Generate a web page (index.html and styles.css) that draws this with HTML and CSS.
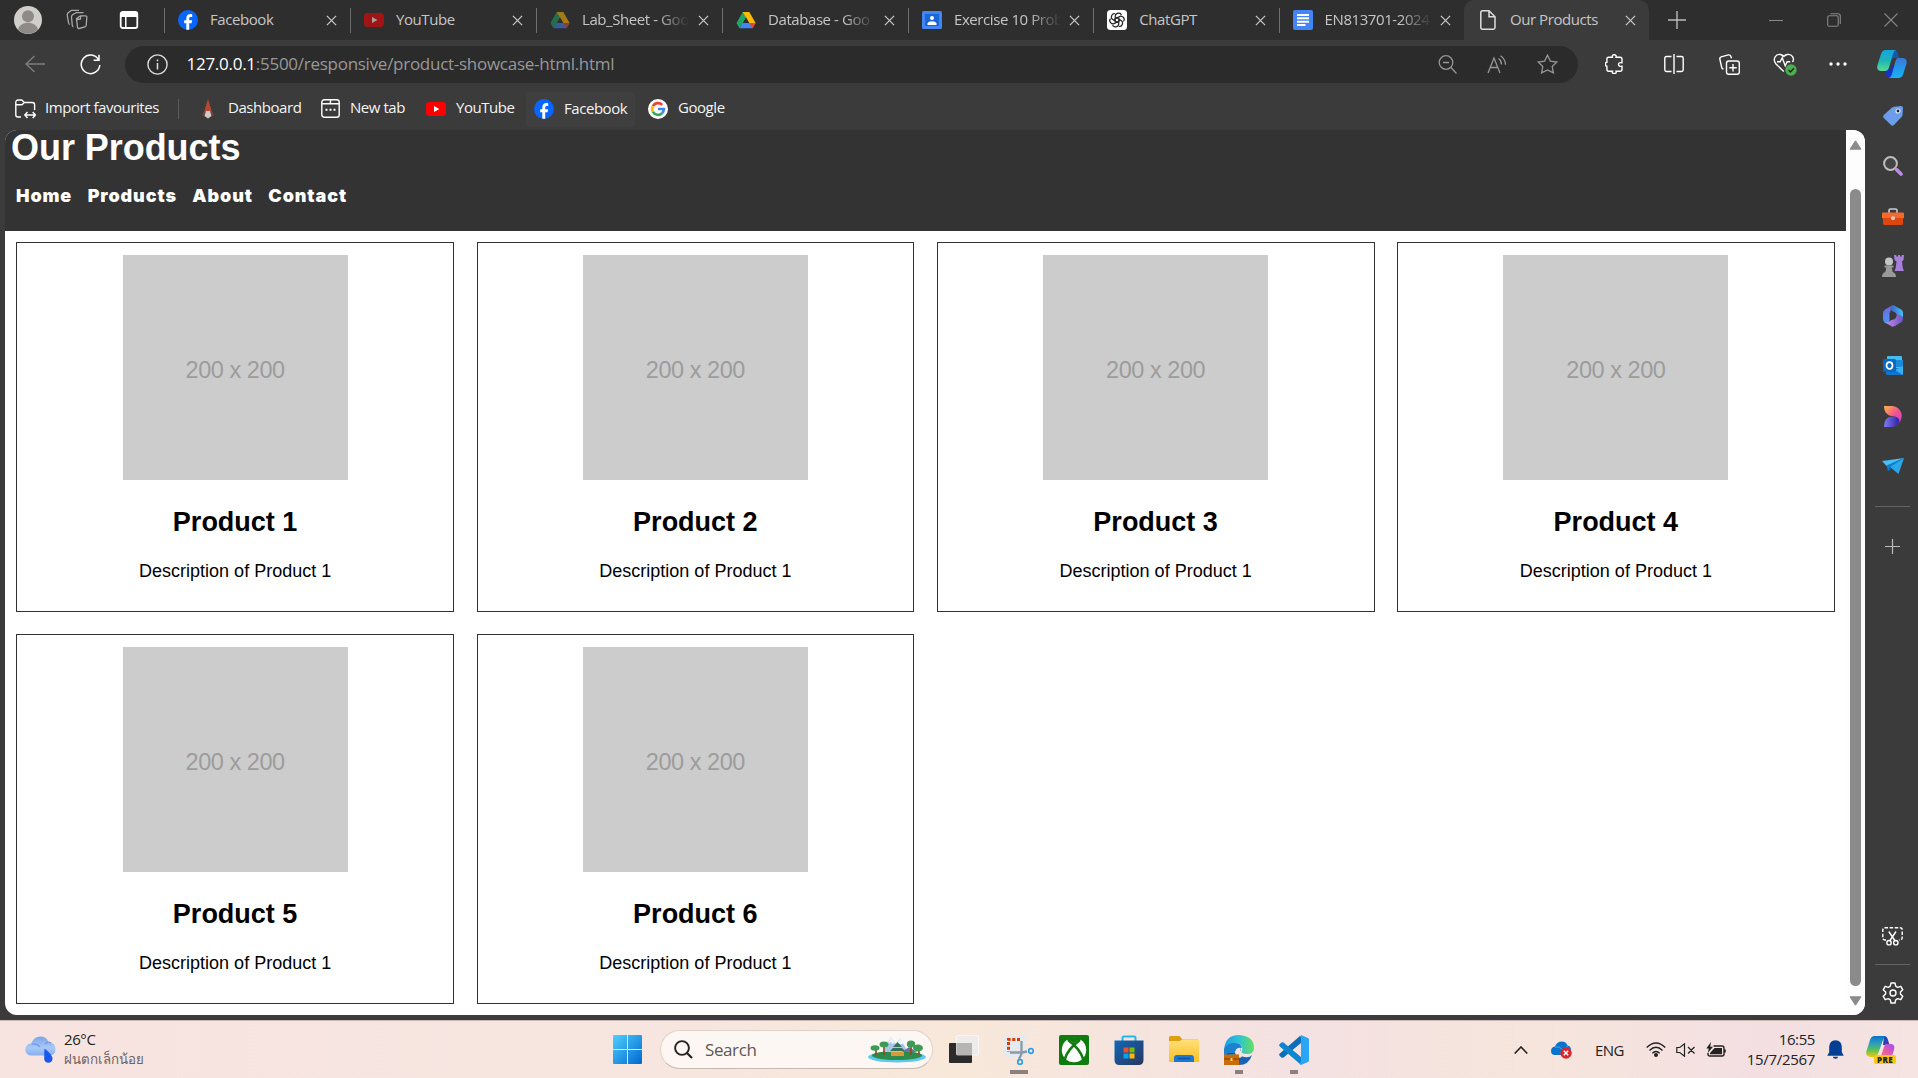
FILE: index.html
```html
<!DOCTYPE html>
<html lang="en">
<head>
<meta charset="utf-8">
<title>Our Products</title>
<link rel="stylesheet" href="styles.css">
</head>
<body>
<svg class="defs" width="0" height="0" aria-hidden="true">
  <defs>
    <linearGradient id="gCop1" x1="0" y1="0" x2="0" y2="1"><stop offset="0" stop-color="#16a3df"/><stop offset=".5" stop-color="#1cb4b8"/><stop offset="1" stop-color="#5bdc8f"/></linearGradient>
    <linearGradient id="gCop2" x1="0" y1="0" x2="0" y2="1"><stop offset="0" stop-color="#3a78dc"/><stop offset="1" stop-color="#13b5f5"/></linearGradient>
    <linearGradient id="gM1" x1="0" y1="0" x2="0" y2="1"><stop offset="0" stop-color="#7a5fe0"/><stop offset="1" stop-color="#3f9cf0"/></linearGradient>
    <linearGradient id="gM2" x1="0" y1="0" x2="1" y2="0"><stop offset="0" stop-color="#3a60c8"/><stop offset="1" stop-color="#41c5f2"/></linearGradient>
    <linearGradient id="gM3" x1="0" y1="0" x2="1" y2="0"><stop offset="0" stop-color="#c58cf0"/><stop offset="1" stop-color="#6d55c4"/></linearGradient>
    <linearGradient id="gDes1" x1="0" y1="0" x2="1" y2="1"><stop offset="0" stop-color="#ffb648"/><stop offset=".5" stop-color="#f2558a"/><stop offset="1" stop-color="#c03be8"/></linearGradient>
    <linearGradient id="gDes2" x1="0" y1="0" x2="1" y2="0"><stop offset="0" stop-color="#7d7cf8"/><stop offset="1" stop-color="#2d1f9c"/></linearGradient>
    <linearGradient id="gWin" x1="0" y1="0" x2="1" y2="1"><stop offset="0" stop-color="#4fd0ff"/><stop offset="1" stop-color="#0067cf"/></linearGradient>
    <linearGradient id="gCloud" x1="0" y1="0" x2="0" y2="1"><stop offset="0" stop-color="#7ba4e8"/><stop offset=".6" stop-color="#a9c9f7"/><stop offset="1" stop-color="#86aeec"/></linearGradient>
    <linearGradient id="gFold" x1="0" y1="0" x2="0" y2="1"><stop offset="0" stop-color="#ffe07a"/><stop offset="1" stop-color="#fbbf24"/></linearGradient>
    <linearGradient id="gStore" x1="0" y1="0" x2="1" y2="1"><stop offset="0" stop-color="#1069b8"/><stop offset="1" stop-color="#2b3560"/></linearGradient>
    <linearGradient id="gEdge" x1="0" y1="0" x2="1" y2="0"><stop offset="0" stop-color="#1c9fe0"/><stop offset=".5" stop-color="#2cc3d5"/><stop offset="1" stop-color="#66e05c"/></linearGradient>
    <linearGradient id="gRain" x1="0" y1="0" x2="0" y2="1"><stop offset="0" stop-color="#0a72c8"/><stop offset=".35" stop-color="#2c9cc0"/><stop offset=".65" stop-color="#57bf5c"/><stop offset="1" stop-color="#f3c80f"/></linearGradient>
    <linearGradient id="gPink" x1="1" y1="0" x2="0" y2="1"><stop offset="0" stop-color="#a04df5"/><stop offset=".55" stop-color="#f0609a"/><stop offset="1" stop-color="#ff8a4c"/></linearGradient>
    <symbol id="x" viewBox="0 0 12 12"><path d="M1 1l10 10M11 1L1 11" fill="none" stroke="currentColor" stroke-width="1.4"/></symbol>
    <symbol id="fb" viewBox="0 0 20 20"><circle cx="10" cy="10" r="10" fill="#0866ff"/><path d="M8.3 19.8v-6.6H6.2v-3h2.1V8.7c0-3.200 1.500-4.700 4.700-4.600l1.200.15v2.700h-1.300c-1.300 0-1.700.5-1.700 1.700v1.500h2.900l-.5 3h-2.400v6.650z" fill="#fff"/></symbol>
    <symbol id="yt" viewBox="0 0 20 20"><rect y="3" width="20" height="14" rx="3.400" fill="#f00"/><path d="M8 7l5.400 3L8 13z" fill="#fff"/></symbol>
    <symbol id="drive" viewBox="0 0 20 20"><path d="M6.700 2h6.600L7 13 3.500 18.300 0.500 13z" fill="#1fa463"/><path d="M6.700 2h6.600l6.300 11h-6.300z" fill="#ffba00"/><path d="M6.700 13h12.900l-3.100 5.300H3.500z" fill="#4285f4"/><path d="M13.300 13h6.300l-3.100 5.300z" fill="#ea4335"/><path d="M10 7.700L7 13h6z" fill="#2e2e2e"/></symbol>
  </defs>
</svg>

<div class="browser">
  <header class="tabs">
    <div class="window-tools">
      <svg width="28" height="28" viewBox="0 0 28 28"><circle cx="14" cy="14" r="14" fill="#d0cecb"/><circle cx="14" cy="10.300" r="6" fill="#8d8a87"/><path d="M4 23.500c2-9 18-9 20 0A14 14 0 0 1 4 23.500z" fill="#8d8a87"/></svg>
      <svg width="22" height="22" viewBox="0 0 22 22" fill="none" stroke="#a9a9a9" stroke-width="1.300" stroke-linejoin="round"><path d="M10.500 9.500l4-2.700h5q1.500 0 1.300 1.500l-.6 8.200q-.2 1.200-1.300 1.400l-5.700 1.600q-1.500.2-1.700-1.200zM14.500 7v3l-4 .5"/><path d="M7.500 18q-1-.3-1.200-1.500L5.500 8q0-1.500 1-2.200L10 3.700h7.500M3.800 15.500q-1-.3-1.200-1.500L1.200 6q0-1.500 1-2.300L5.500 1.300h7.500"/></svg>
      <svg width="20" height="20" viewBox="0 0 20 20"><rect x="1.700" y="2" width="16.600" height="16" rx="2" fill="none" stroke="#fff" stroke-width="1.800"/><path d="M1.500 2.500h17V7h-17zM6 6h1.500v12H6z" fill="#fff"/></svg>
    </div>
    <div class="tab"><svg class="fav"><use href="#fb"/></svg><span class="name">Facebook</span><svg class="close"><use href="#x"/></svg></div>
    <div class="tab dim"><svg class="fav"><use href="#yt"/></svg><span class="name">YouTube</span><svg class="close"><use href="#x"/></svg></div>
    <div class="tab dim"><svg class="fav"><use href="#drive"/></svg><span class="name fade">Lab_Sheet - Goo</span><svg class="close"><use href="#x"/></svg></div>
    <div class="tab"><svg class="fav"><use href="#drive"/></svg><span class="name fade">Database - Goo</span><svg class="close"><use href="#x"/></svg></div>
    <div class="tab"><svg class="fav" viewBox="0 0 20 20"><rect y="1" width="20" height="18" rx="1.500" fill="#4285f4"/><rect x="3" y="4" width="14" height="12" fill="#1967d2"/><circle cx="10" cy="8" r="2" fill="#fff"/><path d="M5.500 15v-1.500c1-3 8-3 9 0V15z" fill="#fff"/></svg><span class="name fade">Exercise 10 Prob</span><svg class="close"><use href="#x"/></svg></div>
    <div class="tab"><svg class="fav" viewBox="0 0 20 20"><rect width="20" height="20" rx="3.500" fill="#fff"/><g fill="none" stroke="#222" stroke-width="1.150"><path d="M8.200 12.800V6.600c0-4 5.500-4.600 6.200-1.500"/><path d="M8.200 12.800V6.600c0-4 5.500-4.600 6.200-1.500" transform="rotate(60 10 10)"/><path d="M8.200 12.800V6.600c0-4 5.500-4.600 6.200-1.500" transform="rotate(120 10 10)"/><path d="M8.200 12.800V6.600c0-4 5.500-4.600 6.200-1.500" transform="rotate(180 10 10)"/><path d="M8.200 12.800V6.600c0-4 5.500-4.600 6.200-1.500" transform="rotate(240 10 10)"/><path d="M8.200 12.800V6.600c0-4 5.500-4.600 6.200-1.500" transform="rotate(300 10 10)"/></g></svg><span class="name">ChatGPT</span><svg class="close"><use href="#x"/></svg></div>
    <div class="tab"><svg class="fav" viewBox="0 0 20 20"><rect width="20" height="20" rx="2" fill="#4285f4"/><path d="M4 5h12M4 8.300h12M4 11.700h12M4 15h8.500" stroke="#fff" stroke-width="1.900"/></svg><span class="name fade">EN813701-2024</span><svg class="close"><use href="#x"/></svg></div>
    <div class="tab active"><svg class="fav" viewBox="0 0 20 20" fill="none" stroke="#ddd" stroke-width="1.500"><path d="M4.500.8h6.500l6 6v10.700q0 1.700-1.700 1.700H4.500q-1.700 0-1.700-1.700V2.500Q2.800.8 4.500.8zM11 .8v6h6"/></svg><span class="name">Our Products</span><svg class="close"><use href="#x"/></svg></div>
    <svg class="new-tab" viewBox="0 0 18 18"><path d="M9 0v18M0 9h18" stroke="#bbb" stroke-width="1.400"/></svg>
    <div class="window-buttons">
      <svg viewBox="0 0 14 14"><path d="M0 7.500h14"/></svg>
      <svg viewBox="0 0 14 14"><rect x=".7" y="2.700" width="10.500" height="10.500" rx="1.500"/><path d="M3.500.7H11q2.300 0 2.300 2.300v8"/></svg>
      <svg viewBox="0 0 14 14"><path d="M.5.5l13 13M13.500.5l-13 13"/></svg>
    </div>
  </header>

  <div class="toolbar">
    <div class="slot back"><svg width="20" height="18" viewBox="0 0 20 18"><path d="M20 9H1M9.500 1L1 9l8.500 8" fill="none" stroke="#7c7c7c" stroke-width="1.400"/></svg></div>
    <div class="slot reload"><svg width="21" height="21" viewBox="0 0 21 21"><path d="M18.500 5.500A9.300 9.300 0 1 0 19.800 11M19 .8v5.400h-5.400" fill="none" stroke="#fff" stroke-width="1.500"/></svg></div>
    <div class="address">
      <svg width="21" height="21" viewBox="0 0 21 21"><circle cx="10.500" cy="10.500" r="9.600" fill="none" stroke="#ddd" stroke-width="1.400"/><path d="M10.500 9v6.500M10.500 5.500v1.700" stroke="#ddd" stroke-width="1.500"/></svg>
      <span class="url"><b>127.0.0.1</b>:5500/responsive/product-showcase-html.html</span>
      <svg width="19" height="19" viewBox="0 0 19 19" class="ln"><circle cx="8" cy="7.500" r="6.800"/><path d="M13 12.500l5.500 6M5 7.500h6"/></svg>
      <svg width="20" height="19" viewBox="0 0 20 19" class="ln"><path d="M1 18L7 3l6 15M3.300 12.500h7.500M11.500 3.500q3 2 3 6M13.500.8q5 3.500 5 9"/></svg>
      <svg width="21" height="20" viewBox="0 0 21 20" class="ln"><path d="M10.500 1.200l2.900 5.900 6.500.9-4.700 4.500 1.200 6.400-5.900-3-5.900 3 1.200-6.400L1.100 8l6.500-.9z"/></svg>
    </div>
    <div class="slot puzzle"><svg width="19" height="20" viewBox="0 0 19 20" class="wh"><path d="M3.500 3.200h4q-.8-2.500 1.700-2.500t1.800 2.500h4q2 0 2 2v3.500q-3.500-.5-3.500 1.800t3.500 1.800v3q0 2-2 2h-4q.8 2.200-1.800 2.200t-1.700-2.200h-4q-1.600 0-1.600-2v-3Q.5 12.500.5 10.200t1.400-2V5.200q0-2 1.600-2z"/></svg></div>
    <i class="rule"></i>
    <div class="slot split"><svg width="20" height="20" viewBox="0 0 20 20" class="wh"><path d="M10 0v20M7.500 2.500h-5Q.8 2.500.8 4.200v11.600q0 1.700 1.700 1.700h5M12.500 2.500h5q1.700 0 1.700 1.700v11.600q0 1.700-1.700 1.700h-5"/></svg></div>
    <div class="slot"><svg width="21" height="21" viewBox="0 0 21 21" class="wh"><rect x="7.500" y="7" width="12.800" height="13.200" rx="2.200"/><path d="M14 10v7.500M10.300 13.700h7.400M4.500 15q-1.500 0-1.800-1.500L.8 5q-.2-1.700 1.300-2.200L9.500.9q1.700-.2 2.300 1.300l.7 2"/></svg></div>
    <div class="slot heart"><svg width="24" height="24" viewBox="0 0 24 24" class="wh"><path d="M10.800 19.500L3 12C-1 7 3 1.500 7.500 2.500q2 .5 3.300 2 1.300-1.500 3.300-2C19 1.500 22 6.500 19.500 10M4 9.700h3.200l2-4 3 8 2-4h3"/><circle cx="18" cy="18" r="5.700" fill="#4caf50" stroke="none"/><path d="M15.500 18l2 2 3.300-3.800" stroke="#222"/></svg></div>
    <div class="slot"><svg width="18" height="4" viewBox="0 0 18 4" fill="#fff"><circle cx="2" cy="2" r="1.700"/><circle cx="9" cy="2" r="1.700"/><circle cx="16" cy="2" r="1.700"/></svg></div>
    <div class="slot copilot"><svg width="30" height="28" viewBox="0 0 30 28"><path d="M17 0q3 0 4 4l1 4h-6l-3 4L11 0z" fill="#1557a8"/><path d="M8 20l5 0 3-6 2 14h-5q-3 0-4-4z" fill="#1434c8"/><path d="M8.500 0H19q-2 .5-3 4l-4 13.500Q11 21 7.500 21H3.500Q-.8 20.500.5 15L4 4Q5.300 0 8.500 0z" fill="url(#gCop1)"/><path d="M21 8h5q4.600.5 3.400 6l-3.200 10q-1.200 4-4.700 4H11.500q2.500-.5 3.500-4l3.500-13Q19.500 8 21 8z" fill="url(#gCop2)"/></svg></div>
  </div>

  <div class="body">
    <div class="main">
      <nav class="favourites">
        <a class="f-import"><svg width="21" height="20" viewBox="0 0 21 20" class="wh"><path d="M6 18H3Q.8 18 .8 15.800V3.500Q.8 1 3.300 1h3.500l2.500 2.500h8q2.300 0 2.300 2.300V11M1 5.800h6l2.300-2.300M10 16h10M12.500 13L9.800 16l2.700 3M17.700 13l2.700 3-2.700 3"/></svg><span>Import favourites</span></a>
        <i class="rule"></i>
        <a class="f-dash"><svg width="12" height="20" viewBox="0 0 12 20"><path d="M6 0l3 10 .5 3h-7L3 10z" fill="#b8472f"/><path d="M3 9L0 17l3.500-1zM9 9l3 8-3.500-1z" fill="#7d4038"/><path d="M4 12h4l1.500 5-3.500 2.500L2.500 17z" fill="#cfcac8"/></svg><span>Dashboard</span></a>
        <a class="f-new"><svg width="19" height="19" viewBox="0 0 19 19" class="wh"><rect x=".8" y=".8" width="17.400" height="17.400" rx="2.500"/><path d="M1 4.800h7q1.500 0 1.500-1.500V1M9.500 4.800h8.500" /><path d="M4.500 10.800h2M8.500 10.800h2M12.500 10.800h2" stroke-width="2"/></svg><span>New tab</span></a>
        <a class="f-yt"><svg class="fav"><use href="#yt"/></svg><span>YouTube</span></a>
        <a class="f-fb"><svg class="fav"><use href="#fb"/></svg><span>Facebook</span></a>
        <a class="f-g"><svg width="20" height="20" viewBox="0 0 20 20"><circle cx="10" cy="10" r="10" fill="#fff"/><g fill="none" stroke-width="2.700"><path d="M14.200 5.900A5.900 5.900 0 0 0 4.900 7.100" stroke="#ea4335"/><path d="M4.900 7.100a5.900 5.900 0 0 0 0 5.800" stroke="#fbbc05"/><path d="M4.900 12.900a5.900 5.900 0 0 0 9.100 1.400" stroke="#34a853"/><path d="M14 14.300q1.800-1.600 1.900-4.300H10" stroke="#4285f4"/></g></svg><span>Google</span></a>
      </nav>
      <div class="viewport">
        <div class="page">
          <div class="page-header">
            <h1>Our Products</h1>
            <nav class="menu"><a>Home</a><a>Products</a><a>About</a><a>Contact</a></nav>
          </div>
          <div class="grid">
            <article class="card"><div class="thumb">200 x 200</div><h2>Product 1</h2><p>Description of Product 1</p></article>
            <article class="card"><div class="thumb">200 x 200</div><h2>Product 2</h2><p>Description of Product 1</p></article>
            <article class="card"><div class="thumb">200 x 200</div><h2>Product 3</h2><p>Description of Product 1</p></article>
            <article class="card"><div class="thumb">200 x 200</div><h2>Product 4</h2><p>Description of Product 1</p></article>
            <article class="card"><div class="thumb">200 x 200</div><h2>Product 5</h2><p>Description of Product 1</p></article>
            <article class="card"><div class="thumb">200 x 200</div><h2>Product 6</h2><p>Description of Product 1</p></article>
          </div>
        </div>
        <div class="scrollbar">
          <svg width="13" height="10" viewBox="0 0 13 10"><path d="M6.500.8L12 9.200H1z" fill="#8b8b8b" stroke="#8b8b8b" stroke-linejoin="round"/></svg>
          <div class="thumb-bar"></div>
          <svg width="13" height="10" viewBox="0 0 13 10"><path d="M6.500 9.200L12 .8H1z" fill="#8b8b8b" stroke="#8b8b8b" stroke-linejoin="round"/></svg>
        </div>
      </div>
    </div>
    <aside class="sidebar">
      <div class="side"><svg width="20" height="20" viewBox="0 0 20 20"><path d="M11 .8L18 0q2 0 2 2l-.5 7q0 1-1 2L11 19q-1.500 1.500-3 0L.8 12q-1.300-1.500 0-3L8.500 2Q9.500 1 11 .8z" fill="#6c9cec"/><circle cx="15" cy="5" r="2" fill="#222" stroke="#dce8fa" stroke-width="1.200"/></svg></div>
      <div class="side"><svg width="20" height="20" viewBox="0 0 20 20"><circle cx="7.500" cy="7.500" r="6.400" fill="#444" stroke="#bdbdbd" stroke-width="2"/><path d="M12 12l2.500 2.500" stroke="#aaa" stroke-width="2"/><path d="M14 14l4 4" stroke="#bd8bea" stroke-width="3.600" stroke-linecap="round"/></svg></div>
      <div class="side"><svg width="22" height="17" viewBox="0 0 22 17"><path d="M7 5V2.500Q7 1 8.500 1h5Q15 1 15 2.500V5" fill="none" stroke="#ccc" stroke-width="1.600"/><rect y="4.500" width="22" height="6" rx="1" fill="#f46a2c"/><path d="M1 10h20v5.500q0 1.500-1.500 1.500h-17Q1 17 1 15.500z" fill="#de460e"/><circle cx="11" cy="10.300" r="2" fill="#d8c8bd"/></svg></div>
      <div class="side"><svg width="22" height="22" viewBox="0 0 22 22"><path d="M12 0h2.300v1.500h1.700V0h2v1.500h1.700V0H22l-.5 5-1.500 1.500.8 6.500 1.200 3h-9.500l1.200-3 .8-6.500L12.500 5z" fill="#a97fdc"/><circle cx="7" cy="6.500" r="4" fill="#c4c4c4"/><path d="M2.500 10.500h9v2H9.700l1 4.500Q14 18 14 22H0q0-4 3.300-5l1-4.500H2.500z" fill="#9a9a9a"/></svg></div>
      <div class="side"><svg width="20" height="22" viewBox="0 0 20 22"><path d="M10 0L2 4.500Q0 6 0 8v6q0 2.500 2 4 3 1 4.500-2V8z" fill="url(#gM1)"/><path d="M9 .5Q11 0 12 1l6.500 3.800Q20 6 20 8v5l-7-5-4-2Q6 4 9 .5z" fill="url(#gM2)"/><path d="M20 12v2q0 2-1.500 3L12 21q-2 1.300-4 0L2 17.600q4 .4 6-2.600l5-2.500V8z" fill="url(#gM3)"/><path d="M7 8l4-1 3 3-2 4-5 1.500z" fill="#393939"/></svg></div>
      <div class="side"><svg width="20" height="20" viewBox="0 0 20 20"><rect x="4" width="15" height="16" rx="1" fill="#41bdf4"/><path d="M12 4h8v7h-8z" fill="#1b8bd8"/><path d="M3 12h17v5.500q0 1.500-1.500 1.500H4.500Q3 19 3 17.500z" fill="#1276cf"/><path d="M20 10v9l-8-5z" fill="#37b0ed"/><rect y="3" width="13" height="13" rx="1.500" fill="#0a68c0"/><ellipse cx="6.500" cy="9.500" rx="3" ry="3.400" fill="none" stroke="#fff" stroke-width="1.700"/></svg></div>
      <div class="side"><svg width="19" height="21" viewBox="0 0 19 21"><path d="M1 0h8q6 .5 8 4.500 2 2 1.800 6Q18 17 12 19.500q4.500-5 2-8-2-1.500-6-1.500Q1 8 1 0z" fill="url(#gDes1)"/><path d="M1 21q0-11 9-10.500 6 0 6.500 4.500-2 6-9 6z" fill="url(#gDes2)"/></svg></div>
      <div class="side"><svg width="22" height="16" viewBox="0 0 22 16"><path d="M22 0L0 3l4.500 5z" fill="#45bff5"/><path d="M22 0L4.500 7.500 6 13z" fill="#0e7fc7"/><path d="M22 0L8 9l8.500 7z" fill="#2ba6ea"/><path d="M8 9l-2 4.500 4-3z" fill="#0a61a4"/></svg></div>
      <hr class="side-rule">
      <svg class="side-plus" width="15" height="15" viewBox="0 0 15 15"><path d="M7.500 0v15M0 7.500h15" stroke="#bbb" stroke-width="1.200"/></svg>
      <div class="side-bottom">
        <svg width="21" height="19" viewBox="0 0 21 19" class="wh"><path d="M4 13H3Q.8 13 .8 10.800V3Q.8.8 3 .8h15q2.200 0 2.200 2.200v7.800q0 2.200-2.200 2.200h-1" stroke-dasharray="3.500 1.600"/><path d="M6.800 4.500l6 9M14 4.500l-6 9"/><circle cx="7" cy="15.700" r="2.200"/><circle cx="13.800" cy="15.700" r="2.200"/></svg>
        <hr class="side-rule">
        <svg width="22" height="22" viewBox="0 0 22 22" class="wh"><path d="M9 1h4l.7 3.200 2 1.100 3.100-1 2 3.500-2.400 2.200v2l2.400 2.200-2 3.500-3.100-1-2 1.100L13 21H9l-.7-3.200-2-1.100-3.100 1-2-3.500L3.600 12v-2L1.200 7.800l2-3.500 3.100 1 2-1.100z" stroke-linejoin="round"/><circle cx="11" cy="11" r="3"/></svg>
      </div>
    </aside>
  </div>
</div>

<footer class="taskbar">
  <div class="weather">
    <svg width="31" height="28" viewBox="0 0 31 28"><path d="M6.500 19.500a6 6 0 0 1-.5-12Q9 .5 15.500.5q6 0 8 5.500 7 1 7 7 0 6-6 6.500z" fill="url(#gCloud)"/><path d="M7 8q5-1 8 3M20 8q3-3 6-1" stroke="#6f9be4" stroke-width="1.200" fill="none"/><path d="M19.500 12.500q8 6 8 10.500a4.200 4.500 0 0 1-8.300 0q0-4 .3-10.500z" fill="#1b56ee"/></svg>
    <div class="weather-text"><span class="temp">26°C</span><span class="cond">ฝนตกเล็กน้อย</span></div>
  </div>
  <div class="dock">
    <div class="app start"><svg width="29" height="29" viewBox="0 0 29 29"><path d="M1 0h13v14H0V1q0-1 1-1zM15 0h13q1 0 1 1v13H15zM0 15h14v14H1q-1 0-1-1zM15 15h14v13q0 1-1 1H15z" fill="url(#gWin)"/></svg></div>
    <div class="search">
      <svg width="19" height="19" viewBox="0 0 19 19"><circle cx="8" cy="8" r="6.900" fill="none" stroke="#222" stroke-width="1.900"/><path d="M13 13l5 5" stroke="#222" stroke-width="2.200"/></svg>
      <span>Search</span>
      <svg width="58" height="26" viewBox="0 0 58 26"><ellipse cx="29" cy="20" rx="29" ry="5.500" fill="#5ec8ee"/><ellipse cx="29" cy="18.500" rx="25" ry="4.500" fill="#2d8b4c"/><path d="M15 15l8-15 5 7 4-6 8 14z" fill="#a9c6e8"/><path d="M20 7l3-7 4 6-3 1-1-2zM29 7l3-6 4 6-3 0z" fill="#eef6ff"/><path d="M34 15l7-5 8 5z" fill="#746ca8"/><path d="M23 19h13v-4H23zM25 14h9v-3h-9z" fill="#d69a38"/><path d="M22 14h15l-3-3h-9zM25 10h9l-4.500-5z" fill="#34735a"/><path d="M8 12v6M16 9v9M43 10v8M51 12v6" stroke="#8a4a24" stroke-width="1.600"/><g fill="#3c9c54"><ellipse cx="7" cy="11" rx="4.500" ry="2.800"/><ellipse cx="16" cy="7.500" rx="4.500" ry="3"/><ellipse cx="43" cy="7" rx="4.200" ry="3.500"/><ellipse cx="50" cy="11" rx="5" ry="3.500"/></g></svg>
    </div>
    <div class="app"><svg width="30" height="29" viewBox="0 0 30 29"><rect y="8" width="23" height="20" rx="1" fill="#2b2b2b"/><rect x="7.500" y=".5" width="22" height="19.500" rx="1" fill="#ececec" fill-opacity=".88" stroke="#fff" stroke-opacity=".6"/><path d="M8 8h15v12H8z" fill="#b5b5b5"/></svg></div>
    <div class="app open wide"><svg width="30" height="30" viewBox="0 0 30 30"><rect width="22" height="22" rx="2" fill="#e5eaf0"/><path d="M16 4.500H4.500V17" fill="none" stroke="#d83b01" stroke-width="3" stroke-dasharray="3 1.700"/><path d="M17.500 6v13L15 24M6 17.500h12l5-1" stroke="#8c98a4" stroke-width="2.300" fill="none"/><circle cx="16" cy="27" r="2.300" fill="none" stroke="#2b9fe6" stroke-width="1.700"/><circle cx="27" cy="16" r="2.300" fill="none" stroke="#2b9fe6" stroke-width="1.700"/></svg></div>
    <div class="app"><svg width="30" height="30" viewBox="0 0 30 30"><rect width="30" height="30" rx="2" fill="#107c10"/><circle cx="15" cy="15" r="12.200" fill="#fff"/><path d="M15 8.500Q10 4 7 5L8 3Q11.500 1 15 2.500 18.500 1 22 3l1 2Q20 4 15 8.500z" fill="#107c10"/><path d="M9 5Q21.500 14 24.500 25M21 5Q8.500 14 5.500 25" stroke="#107c10" stroke-width="2.600" fill="none"/></svg></div>
    <div class="app"><svg width="30" height="30" viewBox="0 0 30 30"><path d="M8.500 6V3Q8.500 1.500 10 1.500h10Q21.500 1.500 21.500 3v3" fill="none" stroke="#27b5f0" stroke-width="2"/><path d="M.5 5.500h29V25q0 5-5 5h-19q-5 0-5-5z" fill="url(#gStore)"/><path d="M9.500 12.500h5v5h-5z" fill="#f25022"/><path d="M15.500 12.500h5v5h-5z" fill="#7fba00"/><path d="M9.500 18.500h5v5h-5z" fill="#00a4ef"/><path d="M15.500 18.500h5v5h-5z" fill="#ffb900"/></svg></div>
    <div class="app"><svg width="30" height="27" viewBox="0 0 30 27"><path d="M0 1.500Q0 0 1.500 0h9l3 3.500H29v6H0z" fill="#dea010"/><path d="M0 5h11l2-1.500h16q1 0 1 1V26H0z" fill="url(#gFold)"/><path d="M5 26v-4q0-3 3-3h14q3 0 3 3v4z" fill="#1976d2"/><path d="M9 22.500h12" stroke="#0b4f98" stroke-width="1.200"/></svg></div>
    <div class="app open"><svg width="30" height="30" viewBox="0 0 30 30"><path d="M0 15Q1 8 9 8q8 1 8 7-4 4 0 6 8 3 11-1-3 10-13 10Q1 30 0 15z" fill="#1762b4"/><path d="M10 20q2-10 7-8l-1 6 2 4q-4 2-8-2z" fill="#f5e3e1"/><path d="M0 15Q1 0 15 0q15 1 15 13 0 6-7 6-7-.5-5-3Q20 10 13 8 4 7 0 15z" fill="url(#gEdge)"/><path d="M0 17Q1 8 11 8q6 0 7 5-7-2-8 7H0z" fill="#1a82d0"/><rect y="19.500" width="15" height="10.500" fill="#c86b0a"/><path d="M0 24h15" stroke="#7d3c05"/><path d="M4 20v-1.500h7V20" stroke="#7d3c05" fill="none"/><rect x="6.500" y="23" width="2" height="3" fill="#ffd45a"/></svg></div>
    <div class="app open"><svg width="30" height="30" viewBox="0 0 30 30"><path d="M22 8L4.500 22.500q-1 .7-2 0L.8 21q-1.300-1.200 0-2.400L21.500.5 23 8z" fill="#0a6fb8"/><path d="M22 22L4.500 7.500q-1-.7-2 0L.8 9q-1.300 1.200 0 2.400L21.500 29.500 23 22z" fill="#0d86d0"/><path d="M22 0l7 3q1 .5 1 1.500v21q0 1-1 1.500l-7 3q-1-.3-1.500-1L22 27z" fill="#2aa6f4"/></svg></div>
  </div>
  <div class="tray">
    <svg class="t-chev" width="14" height="8" viewBox="0 0 14 8"><path d="M.7 7.500L7 1l6.300 6.500" fill="none" stroke="#222" stroke-width="1.600"/></svg>
    <svg class="t-cloud" width="21" height="18" viewBox="0 0 21 18"><path d="M4 14Q0 14 0 10t4-4.500Q6 .5 11 .5q4 0 5.500 4Q20 5 20 9v5z" fill="#0a74cc"/><path d="M4 6q5-1 8 3l5-4" fill="none" stroke="#3fa3ea"/><circle cx="15" cy="12" r="5.700" fill="#d9252c"/><path d="M12.800 9.800l4.400 4.400M17.200 9.800l-4.400 4.400" stroke="#fff" stroke-width="1.400"/></svg>
    <span class="lang">ENG</span>
    <svg class="t-wifi" width="20" height="15" viewBox="0 0 20 15" fill="none" stroke="#222" stroke-width="1.400"><path d="M.7 5.500q9.300-9 18.600 0M3.500 8.500q6.500-6.400 13 0M6.300 11.300q3.700-3.700 7.400 0"/><circle cx="10" cy="13" r="1.300" fill="#222"/></svg>
    <svg class="t-vol" width="20" height="14" viewBox="0 0 20 14" fill="none" stroke="#222" stroke-width="1.200"><path d="M.8 4.500h3L8.500.8v12.400L3.800 9.500h-3zM12 4l6.500 6.500M18.500 4L12 10.500"/></svg>
    <svg class="t-bat" width="20" height="16" viewBox="0 0 20 16"><path d="M7.500 4H16q2 0 2 2v6q0 2-2 2H4q-2 0-2-2v-1" fill="none" stroke="#222" stroke-width="1.400"/><path d="M4 12.200V11l4.500-5H16v6.200z" fill="#222"/><path d="M18 7.500h1.800v3H18z" fill="#222"/><path d="M5 0L.3 6.500h2.500L1.800 11 7 4.800H4.200z" fill="#222"/></svg>
    <div class="clock"><span>16:55</span><span class="date">15/7/2567</span></div>
    <svg class="t-bell" width="17" height="19" viewBox="0 0 17 19"><path d="M2.200 7Q2.500.3 8.500.3T14.800 7v5l1.900 3.700H.3L2.200 12zM5.800 16.800h5.400q-.4 2-2.700 2t-2.700-2z" fill="#003f94"/></svg>
    <div class="pilot"><svg width="30" height="26" viewBox="0 0 30 26"><path d="M18 0q3 0 4 4l1.500 5H17z" fill="#2347b8"/><path d="M8.500 0H20q-2 1-3 4l-5 14q-1 3-4 3H4Q-1 20 .5 15L4 4Q5.300 0 8.500 0z" fill="url(#gRain)"/><path d="M20 8h5q4.500.5 3 6l-2 6q-1 4-4 4H11q3-1 4-4l3-9q.7-3 2-3z" fill="url(#gPink)"/></svg><span class="pre">PRE</span></div>
  </div>
</footer>
</body>
</html>
```
FILE: styles.css
```css
* { box-sizing: border-box; }

body {
  margin: 0;
  width: 1918px;
  height: 1078px;
  overflow: hidden;
  font-family: "Open Sans", "Noto Sans", sans-serif;
  background: #3b3b3b;
}

svg { display: block; flex: none; }
.defs { position: absolute; }
.fav { width: 20px; height: 20px; }
.wh { fill: none; stroke: #fff; stroke-width: 1.4; }
.ln { fill: none; stroke: #969696; stroke-width: 1.3; }

.browser { height: 1020px; display: flex; flex-direction: column; background: #3b3b3b; }

/* Tab strip */
.tabs { height: 40px; display: flex; align-items: center; background: #2e2e2e; }
.window-tools { width: 164px; display: flex; align-items: center; padding-left: 14px; gap: 24px; }
.window-tools svg:last-child { margin-left: 7px; }
.tab {
  width: 186px; height: 40px; padding: 0 13px 0 14px; flex: none;
  display: flex; align-items: center; color: #c6c6c6;
  background: linear-gradient(#6d6d6d, #6d6d6d) 0 8px / 1px 25px no-repeat;
}
.tab:nth-child(n+6) { width: 185.3px; }
.tab .name { flex: 1; margin-left: 12px; padding-bottom: 2px; font-size: 15px; letter-spacing: -0.42px; white-space: nowrap; }
.tab .fade { -webkit-mask-image: linear-gradient(90deg, #000 75px, transparent 107px); mask-image: linear-gradient(90deg, #000 75px, transparent 107px); }
.tab .close { width: 11px; height: 11px; margin-top: 1px; }
.tab.dim .fav { opacity: .55; }
.tab.active { background: #3b3b3b; border-radius: 10px 10px 0 0; }
.new-tab { width: 18px; height: 18px; margin-left: 19px; }
.window-buttons { margin-left: auto; margin-right: 20px; display: flex; gap: 43.5px; }
.window-buttons svg { width: 14px; height: 14px; fill: none; stroke: #868686; stroke-width: 1.1; }

/* Toolbar */
.toolbar { height: 48px; display: flex; align-items: center; }
.slot { width: 54.5px; display: flex; justify-content: center; flex: none; }
.slot.back { width: 69px; }
.slot.reload { width: 42px; margin-right: 14px; }
.slot.puzzle { width: 67px; padding-left: 6px; }
.slot.split { width: 57px; }
.slot.heart { padding-left: 3px; }
.slot.copilot { width: 53px; }
.rule { width: 1px; height: 20px; background: #666; }
.address {
  width: 1453px; height: 37px; border-radius: 19px; background: #2b2b2b;
  display: flex; align-items: center; padding: 0 20px 0 22px; gap: 30px; flex: none;
}
.address > svg:first-child { margin-right: -11.5px; }
.url { flex: 1; padding-bottom: 2px; font-size: 17px; letter-spacing: -0.27px; color: #989898; white-space: nowrap; }
.url b { color: #fff; font-weight: 400; }

.body { flex: 1; display: flex; min-height: 0; }
.main { width: 1865px; display: flex; flex-direction: column; }

/* Favourites bar */
.favourites { height: 42px; display: flex; align-items: center; padding-left: 15px; font-size: 15px; letter-spacing: -0.45px; color: #f4f4f4; }
.favourites a { display: flex; align-items: center; white-space: nowrap; height: 35px; padding-bottom: 1px; }
.favourites span { padding-bottom: 3px; }
.favourites .rule { height: 20px; background: #5a5a5a; }
.f-import { gap: 9px; width: 163px; }
.f-dash { gap: 14px; margin-left: 23px; width: 119px; }
.f-new { gap: 10px; width: 105px; }
.f-yt { gap: 10px; width: 100px; }
.f-fb { gap: 10px; width: 109px; padding-left: 8px; background: #3f3f3f; border-radius: 4px; }
.favourites .f-fb span { padding-bottom: 1px; }
.f-g { gap: 10px; margin-left: 13px; }

/* Web page */
.viewport { width: 1860px; height: 885px; margin-left: 5px; display: flex; background: #fff; border-radius: 12px; overflow: hidden; }
.page { width: 1841px; font-family: "Liberation Sans", Arial, sans-serif; }
.page-header { height: 101px; padding: 0 6px; background: #333; color: #fff; }
.page-header h1 { margin: 0; font-size: 36px; line-height: 36px; letter-spacing: -.05px; }
.menu { display: flex; gap: 15.5px; padding: 18px 5px 0; font: 900 18px/24px Inter, sans-serif; letter-spacing: .88px; }
.grid { display: grid; grid-template-columns: repeat(4, 1fr); gap: 22px 22.5px; padding: 11px 11.25px; }
.card { height: 370px; border: 1px solid #333; padding-top: 12px; text-align: center; color: #000; }
.thumb { width: 225px; height: 225px; margin: 0 auto; background: #ccc; color: #9c9c9c; font-size: 23.5px; line-height: 231px; letter-spacing: -.45px; }
.card h2 { margin: 27px 0 0; font-size: 27px; line-height: 31px; }
.card p { margin: 23px 0 0; font-size: 18px; line-height: 21px; }

.scrollbar { width: 19px; background: #fdfdfd; display: flex; flex-direction: column; align-items: center; padding: 10px 0 9px; }
.thumb-bar { width: 11px; height: 797px; margin: 39px 0 10px; border-radius: 6px; background: #8b8b8b; }

/* Edge sidebar */
.sidebar { width: 53px; display: flex; flex-direction: column; align-items: center; padding: 3px 0 0 2px; }
.side { height: 50px; display: flex; align-items: center; }
.side-rule { width: 35px; height: 1px; margin: 0; border: 0; background: #636363; }
.side + .side-rule { margin-top: 15px; }
.side-plus { margin-top: 32px; }
.side-bottom { margin-top: auto; padding-bottom: 16px; display: flex; flex-direction: column; align-items: center; }
.side-bottom .side-rule { margin: 18px 0 17px; }

/* Taskbar */
.taskbar {
  height: 58px; border-top: 1px solid #c9b9b6; display: flex; color: #222;
  background: linear-gradient(90deg, #f7e4e1 0, #f7e5e0 30%, #f7e8da 50%, #f4e1e2 68%, #f6e5dc 80%, #f3dfe2 92%, #f5e4e1 100%);
}
.weather { width: 600px; padding-left: 25px; display: flex; align-items: center; gap: 8px; }
.weather-text { display: flex; flex-direction: column; font-size: 15px; line-height: 20px; }
.temp { letter-spacing: -.4px; }
.cond { color: #6b6361; font-size: 13.3px; line-height: 21px; white-space: nowrap; }
.dock { width: 722px; display: flex; align-items: center; }
.app { width: 55px; height: 57px; display: flex; align-items: center; justify-content: center; flex: none; }
.app.open { background: linear-gradient(#8b807d, #8b807d) center 49px / 8px 4px no-repeat; }
.app.open.wide { background-size: 18px 4px; }
.search { width: 273px; height: 39px; margin: 0 3px 0 5px; border-radius: 20px; border: 1px solid #e3d2cb; border-bottom-color: #c5b8b2; background: #fdf7f4; display: flex; align-items: center; padding: 0 6px 0 13px; }
.search span { flex: 1; margin-left: 12px; font-size: 17px; letter-spacing: -.4px; color: #5d5856; }
.tray { flex: 1; display: flex; align-items: center; }
.t-chev { margin-left: 192px; }
.t-cloud { margin-left: 23px; }
.lang { margin-left: 23px; width: 51px; font-size: 15px; letter-spacing: -.6px; }
.t-vol { margin-left: 10px; }
.t-bat { margin-left: 10px; }
.clock { width: 89px; display: flex; flex-direction: column; text-align: right; font-size: 15px; line-height: 20px; letter-spacing: -.4px; padding-bottom: 2px; }
.date { letter-spacing: -.3px; }
.t-bell { margin-left: 12px; }
.pilot { position: relative; margin-left: 22px; height: 28px; }
.pre { position: absolute; left: 8px; bottom: 0; width: 22px; height: 9px; border-radius: 2px; background: #fbc812; font: 800 8px/9px "Open Sans", sans-serif; letter-spacing: .3px; text-align: center; color: #222; }
```
